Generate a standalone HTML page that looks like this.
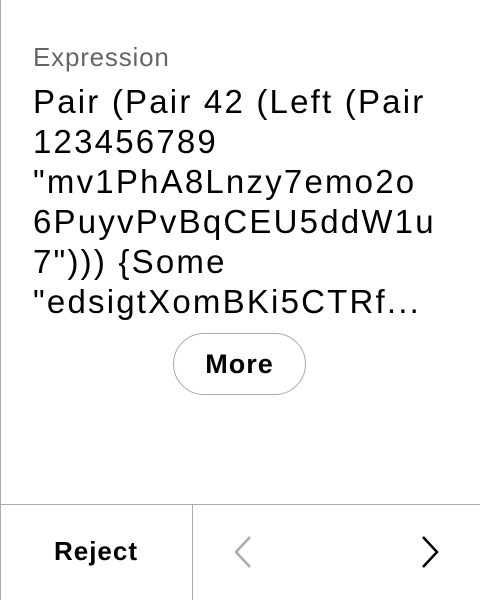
<!DOCTYPE html>
<html><head><style>
body{margin:0;width:480px;height:600px;background:#fff;font-family:"Liberation Sans",sans-serif;position:relative;overflow:hidden}
.lb{position:absolute;left:0;top:0;width:1px;height:600px;background:#aaa}
.lab{position:absolute;left:33px;top:41px;font-size:26px;letter-spacing:0.8px;color:#666;line-height:32px}
.val{position:absolute;left:33px;top:82px;font-size:33px;letter-spacing:2.2px;line-height:40px;color:#000;width:447px;white-space:nowrap}
.more{position:absolute;left:173px;top:333px;width:133px;height:62px;border:1px solid #aaa;border-radius:31px;box-sizing:border-box;text-align:center;line-height:60px;font-size:27px;letter-spacing:1px;font-weight:bold}
.h{position:absolute;left:0;top:504px;width:480px;height:1px;background:#aaa}
.v{position:absolute;left:192px;top:504px;width:1px;height:96px;background:#aaa}
.rej{position:absolute;left:0;top:504px;width:192px;height:96px;text-align:center;line-height:94px;font-size:26px;letter-spacing:1px;font-weight:bold}
svg{position:absolute}
</style></head><body>
<div class="lb"></div>
<div class="lab">Expression</div>
<div class="val">Pair (Pair 42 (Left (Pair<br>123456789<br>"mv1PhA8Lnzy7emo2o<br>6PuyvPvBqCEU5ddW1u<br>7"))) {Some<br>"edsigtXomBKi5CTRf...</div>
<div class="more">More</div>
<div class="h"></div><div class="v"></div>
<div class="rej">Reject</div>
<svg style="left:232px;top:535px" width="22" height="34"><path d="M18 2 L4 17 L18 32" stroke="#aaa" stroke-width="2.5" fill="none"/></svg>
<svg style="left:419px;top:535px" width="22" height="34"><path d="M4 2 L18 17 L4 32" stroke="#000" stroke-width="2.5" fill="none"/></svg>
</body></html>
